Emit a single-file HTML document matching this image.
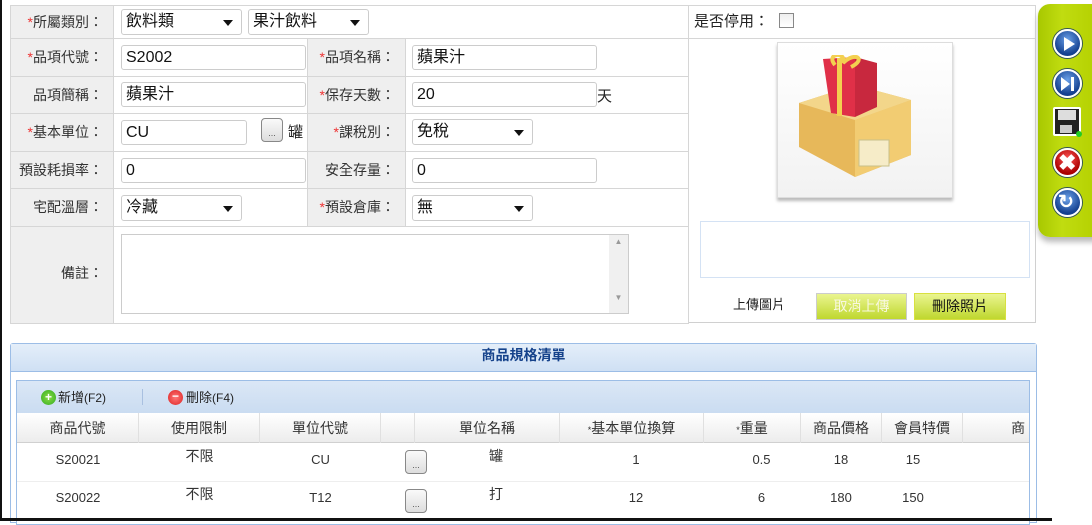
<!DOCTYPE html>
<html><head><meta charset="utf-8"><style>
*{box-sizing:border-box;margin:0;padding:0}
body{width:1092px;height:521px;background:#fff;position:relative;overflow:hidden;font-family:"Liberation Sans","Noto Sans CJK TC",sans-serif;font-size:14px;color:#222}
.a{position:absolute}
.lb{position:absolute;background:#efefef;border:1px solid #d6d6d6;text-align:right;padding-right:10px;color:#333;font-size:14px}
.vc{position:absolute;border:1px solid #d6d6d6;background:#fff}
.r{color:#e33}
.in{position:absolute;height:25px;border:1px solid #ccc;border-radius:3px;background:#fff;font-size:16px;line-height:23px;padding:0 4px;color:#111;overflow:hidden;white-space:nowrap}
.sel:after{content:"";position:absolute;right:8px;top:10px;border:5px solid transparent;border-top:6px solid #111}
.btn3{position:absolute;width:22px;height:24px;border:1px solid #888;border-radius:4px;background:linear-gradient(#fafafa,#ddd);font-size:9px;text-align:center;line-height:28px;color:#555}
.th{position:absolute;top:413px;height:30px;line-height:30px;text-align:center;font-size:14px;color:#333;border-right:1px solid #e0e0e0}
.td{position:absolute;text-align:center;font-size:13px;color:#333;line-height:16px}
.ic{position:absolute;left:1053px;width:29px;height:29px;border-radius:50%;background:radial-gradient(circle at 50% 35%,#6aa0e8,#14408f 70%);border:2px solid #fff;box-shadow:0 0 0 1px #355}
</style></head><body>
<div class="a" style="left:0;top:0;width:2px;height:521px;background:#111"></div>

<div class="a" style="left:10px;top:5px;width:1026px;height:318px;border:1px solid #d0d0d0;background:#fff"></div>
<div class="lb" style="left:10px;top:5px;width:104px;height:34px;line-height:32px"><span class="r">*</span>所屬類別：</div>
<div class="vc" style="left:113px;top:5px;width:576px;height:34px"></div>
<div class="in sel" style="left:121px;top:9px;width:121px;height:26px">飲料類</div>
<div class="in sel" style="left:248px;top:9px;width:121px;height:26px">果汁飲料</div>

<div class="lb" style="left:10px;top:38px;width:104px;height:39px;line-height:37px"><span class="r">*</span>品項代號：</div>
<div class="vc" style="left:113px;top:38px;width:195px;height:39px"></div>
<div class="in" style="left:121px;top:45px;width:185px">S2002</div>
<div class="lb" style="left:307px;top:38px;width:99px;height:39px;line-height:37px"><span class="r">*</span>品項名稱：</div>
<div class="vc" style="left:405px;top:38px;width:284px;height:39px"></div>
<div class="in" style="left:412px;top:45px;width:185px">蘋果汁</div>

<div class="lb" style="left:10px;top:76px;width:104px;height:38px;line-height:36px">品項簡稱：</div>
<div class="vc" style="left:113px;top:76px;width:195px;height:38px"></div>
<div class="in" style="left:121px;top:82px;width:185px">蘋果汁</div>
<div class="lb" style="left:307px;top:76px;width:99px;height:38px;line-height:36px"><span class="r">*</span>保存天數：</div>
<div class="vc" style="left:405px;top:76px;width:284px;height:38px"></div>
<div class="in" style="left:412px;top:82px;width:185px">20</div>
<div class="a" style="left:597px;top:88px;font-size:15px;line-height:18px">天</div>

<div class="lb" style="left:10px;top:113px;width:104px;height:39px;line-height:37px"><span class="r">*</span>基本單位：</div>
<div class="vc" style="left:113px;top:113px;width:195px;height:39px"></div>
<div class="in" style="left:121px;top:120px;width:126px">CU</div>
<div class="btn3" style="left:261px;top:118px">...</div>
<div class="a" style="left:288px;top:124px;font-size:15px;line-height:18px">罐</div>
<div class="lb" style="left:307px;top:113px;width:99px;height:39px;line-height:37px"><span class="r">*</span>課稅別：</div>
<div class="vc" style="left:405px;top:113px;width:284px;height:39px"></div>
<div class="in sel" style="left:412px;top:119px;width:121px;height:26px">免稅</div>

<div class="lb" style="left:10px;top:151px;width:104px;height:38px;line-height:36px">預設耗損率：</div>
<div class="vc" style="left:113px;top:151px;width:195px;height:38px"></div>
<div class="in" style="left:121px;top:158px;width:185px">0</div>
<div class="lb" style="left:307px;top:151px;width:99px;height:38px;line-height:36px">安全存量：</div>
<div class="vc" style="left:405px;top:151px;width:284px;height:38px"></div>
<div class="in" style="left:412px;top:158px;width:185px">0</div>

<div class="lb" style="left:10px;top:188px;width:104px;height:39px;line-height:37px">宅配溫層：</div>
<div class="vc" style="left:113px;top:188px;width:195px;height:39px"></div>
<div class="in sel" style="left:121px;top:195px;width:121px;height:26px">冷藏</div>
<div class="lb" style="left:307px;top:188px;width:99px;height:39px;line-height:37px"><span class="r">*</span>預設倉庫：</div>
<div class="vc" style="left:405px;top:188px;width:284px;height:39px"></div>
<div class="in sel" style="left:412px;top:195px;width:121px;height:26px">無</div>

<div class="lb" style="left:10px;top:226px;width:104px;height:98px;line-height:92px">備註：</div>
<div class="vc" style="left:113px;top:226px;width:576px;height:98px"></div>
<div class="a" style="left:121px;top:234px;width:508px;height:80px;border:1px solid #ccc;background:#fff"></div>
<div class="a" style="left:609px;top:235px;width:19px;height:78px;background:#f0f0f0;color:#999;font-size:8px;text-align:center;line-height:14px">▲<br><br><br><br>▼</div>

<div class="vc" style="left:688px;top:5px;width:348px;height:34px"></div>
<div class="a" style="left:694px;top:13px;font-size:15px;line-height:18px">是否停用：</div>
<div class="a" style="left:779px;top:13px;width:15px;height:15px;border:1px solid #888;background:linear-gradient(#eee,#fff)"></div>
<div class="a" style="left:777px;top:42px;width:176px;height:156px;border:1px solid #ddd;background:linear-gradient(#fff,#f2f2f2);box-shadow:0 3px 3px #bbb"></div>
<svg class="a" style="left:795px;top:55px" width="140" height="125" viewBox="0 0 140 125">
<polygon points="4,48 60,30 116,45 116,100 60,122 4,92" fill="#e7b85a"/>
<polygon points="60,65 116,45 116,100 60,122" fill="#f2cc72"/>
<polygon points="4,48 60,30 116,45 60,65" fill="#f3d68a"/>
<rect x="64" y="85" width="30" height="26" fill="#f6ecc8" stroke="#c8c08a"/>
<polygon points="28,4 60,2 60,62 36,58" fill="#e03048"/>
<polygon points="60,2 82,8 82,52 60,62" fill="#c8283e"/>
<rect x="42" y="3" width="5" height="58" fill="#f3d050"/>
<path d="M40,10 C30,-2 52,-4 48,8 C60,-4 72,4 56,12" stroke="#f3d050" stroke-width="4" fill="none"/>
</svg>
<div class="a" style="left:700px;top:221px;width:330px;height:57px;border:1px solid #d4e2f4"></div>
<div class="a" style="left:733px;top:297px;font-size:13px;line-height:16px">上傳圖片</div>
<div class="a" style="left:816px;top:293px;width:91px;height:27px;border:1px solid #ccc;background:linear-gradient(#eaf590,#bfd72e);color:#f8f8e0;font-size:14px;text-align:center;line-height:24px">取消上傳</div>
<div class="a" style="left:914px;top:293px;width:92px;height:27px;border:1px solid #d8e040;background:linear-gradient(#eaf590,#bfd72e);color:#111;font-size:14px;text-align:center;line-height:24px">刪除照片</div>

<div class="a" style="left:1038px;top:4px;width:60px;height:233px;border-radius:12px 0 0 12px;background:linear-gradient(90deg,#a8c800,#c0dc10 40%,#b4d000);box-shadow:0 5px 6px #bbb"></div>
<div class="ic" style="top:29px"></div><div class="a" style="left:1064px;top:37px;border:7px solid transparent;border-left:11px solid #fff;border-right:0"></div>
<div class="ic" style="top:69px"></div><div class="a" style="left:1061px;top:77px;border:7px solid transparent;border-left:9px solid #fff;border-right:0"></div><div class="a" style="left:1071px;top:77px;width:3px;height:14px;background:#fff"></div>
<div class="a" style="left:1053px;top:107px;width:28px;height:29px;background:#222;border:2px solid #fff;border-radius:2px"></div><div class="a" style="left:1058px;top:110px;width:18px;height:10px;background:#ddd"></div><div class="a" style="left:1060px;top:125px;width:12px;height:8px;background:#ccc"></div><div class="a" style="left:1076px;top:131px;width:6px;height:6px;border-radius:50%;background:#2c2"></div>
<div class="ic" style="top:148px;background:radial-gradient(circle at 50% 35%,#f55,#a00 70%)"></div><div class="a" style="left:1058px;top:152px;font-size:22px;font-weight:bold;color:#fff;line-height:22px">✖</div>
<div class="ic" style="top:188px"></div><div class="a" style="left:1058px;top:192px;font-size:19px;font-weight:bold;color:#fff;line-height:22px">↻</div>

<div class="a" style="left:10px;top:343px;width:1027px;height:180px;border:1px solid #9cbde6;border-radius:3px 3px 0 0;background:#fff"></div>
<div class="a" style="left:11px;top:344px;width:1025px;height:28px;background:linear-gradient(#e4eef9,#cfe0f4);border-bottom:1px solid #9cbde6;text-align:center;font-weight:bold;color:#15428b;font-size:14px;line-height:22px">商品規格清單</div>
<div class="a" style="left:16px;top:380px;width:1014px;height:145px;border:1px solid #9cbde6;background:#fff"></div>
<div class="a" style="left:17px;top:381px;width:1012px;height:32px;background:linear-gradient(#dbe7f6,#cadcf1)"></div>
<div class="a" style="left:41px;top:390px;width:15px;height:15px;border-radius:50%;background:radial-gradient(#8d4,#3a2);color:#fff;font-size:12px;line-height:14px;text-align:center;font-weight:bold">+</div>
<div class="a" style="left:58px;top:389px;font-size:13px;line-height:17px">新增<span style="font-size:12px">(F2)</span></div>
<div class="a" style="left:142px;top:389px;width:1px;height:16px;background:#a9c0e0"></div>
<div class="a" style="left:168px;top:390px;width:15px;height:15px;border-radius:50%;background:radial-gradient(#f77,#d22);color:#fff;font-size:12px;line-height:13px;text-align:center;font-weight:bold">−</div>
<div class="a" style="left:186px;top:389px;font-size:13px;line-height:17px">刪除<span style="font-size:12px">(F4)</span></div>
<div class="a" style="left:17px;top:413px;width:1012px;height:30px;background:linear-gradient(#fff,#ececec);border-bottom:1px solid #d0d0d0"></div>
<div class="th" style="left:17px;width:122px">商品代號</div>
<div class="th" style="left:139px;width:121px">使用限制</div>
<div class="th" style="left:260px;width:121px">單位代號</div>
<div class="th" style="left:381px;width:34px"></div>
<div class="th" style="left:415px;width:145px">單位名稱</div>
<div class="th" style="left:560px;width:144px"><span style="font-size:9px">*</span>基本單位換算</div>
<div class="th" style="left:704px;width:97px"><span style="font-size:9px">*</span>重量</div>
<div class="th" style="left:801px;width:81px">商品價格</div>
<div class="th" style="left:882px;width:81px">會員特價</div>
<div class="th" style="left:963px;width:66px;border:0;text-align:right">商&nbsp;</div>
<div class="a" style="left:17px;top:481px;width:1012px;height:1px;background:#eee"></div>

<div class="td" style="left:17px;width:122px;top:452px">S20021</div>
<div class="td" style="left:139px;width:121px;top:448px;font-size:14px">不限</div>
<div class="td" style="left:260px;width:121px;top:452px">CU</div>
<div class="btn3" style="left:405px;top:450px">...</div>
<div class="td" style="left:415px;width:162px;top:448px;font-size:14px">罐</div>
<div class="td" style="left:560px;width:152px;top:452px">1</div>
<div class="td" style="left:704px;width:115px;top:452px">0.5</div>
<div class="td" style="left:801px;width:80px;top:452px">18</div>
<div class="td" style="left:882px;width:62px;top:452px">15</div>

<div class="td" style="left:17px;width:122px;top:490px">S20022</div>
<div class="td" style="left:139px;width:121px;top:486px;font-size:14px">不限</div>
<div class="td" style="left:260px;width:121px;top:490px">T12</div>
<div class="btn3" style="left:405px;top:489px">...</div>
<div class="td" style="left:415px;width:162px;top:486px;font-size:14px">打</div>
<div class="td" style="left:560px;width:152px;top:490px">12</div>
<div class="td" style="left:704px;width:115px;top:490px">6</div>
<div class="td" style="left:801px;width:80px;top:490px">180</div>
<div class="td" style="left:882px;width:62px;top:490px">150</div>
<div class="a" style="left:0;top:518px;width:1052px;height:3px;background:#111"></div>
</body></html>
